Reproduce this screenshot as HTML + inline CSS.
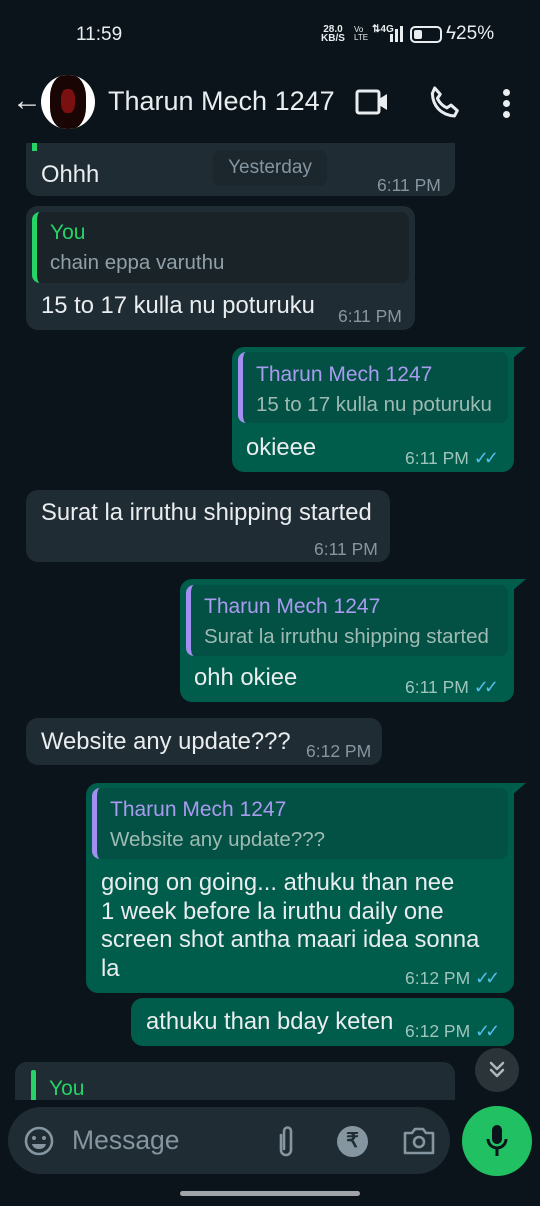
<!DOCTYPE html>
<html><head><meta charset="utf-8"><style>
*{margin:0;padding:0;box-sizing:border-box}
body{width:540px;height:1206px;background:#0b141a;font-family:"Liberation Sans",sans-serif;position:relative;overflow:hidden;color:#e9edef}
.a{position:absolute}
.in{background:#202c33;border-radius:12px}
.out{background:#005c4b;border-radius:12px}
.qi{background:#1a2328;border-radius:8px;border-left:5px solid #25d366}
.qo{background:#025144;border-radius:8px;border-left:5px solid #a38ff0}
.qn{font-size:21px;font-weight:500}
.qt{font-size:20.5px;color:#8fa0a8;white-space:nowrap}
.tx{font-size:23.8px;color:#e9edef;white-space:nowrap}
.tm{font-size:17.5px;color:#8696a0;white-space:nowrap}
.to{color:#9ec5bb}
.ck{color:#53bdeb;font-size:18px;letter-spacing:-5px}
</style></head><body>
<div class="a" style="left:0;top:0;width:540px;height:143px;background:#0b141a;z-index:5">
<div class="a" style="left:76px;top:24px;font-size:19px">11:59</div>
<div class="a" style="left:321px;top:25px;font-size:10px;line-height:9px;font-weight:bold;text-align:center">28.0<br>KB/S</div>
<div class="a" style="left:354px;top:26px;font-size:8px;line-height:8px">Vo<br>LTE</div>
<div class="a" style="left:372px;top:24px;font-size:10px;font-weight:bold">⇅4G</div>
<div class="a" style="left:390px;top:34px;width:3px;height:8px;background:#e9edef"></div>
<div class="a" style="left:395px;top:29px;width:3px;height:13px;background:#e9edef"></div>
<div class="a" style="left:400px;top:26px;width:3px;height:16px;background:#e9edef"></div>
<div class="a" style="left:410px;top:26px;width:32px;height:17px;border:2px solid #e9edef;border-radius:5px;padding:2px"><div style="width:8px;height:100%;background:#e9edef;border-radius:2px"></div></div>
<div class="a" style="left:446px;top:23px;font-size:19px">ϟ25%</div>
<div class="a" style="left:12px;top:86px;font-size:30px;line-height:30px">←</div>
<div class="a" style="left:41px;top:75px;width:54px;height:54px;border-radius:50%;background:#fff;overflow:hidden"><div style="position:absolute;left:9px;top:0;width:36px;height:54px;background:#1a0505;border-radius:40%"><div style="position:absolute;left:11px;top:14px;width:14px;height:24px;background:#7a1010;border-radius:40%"></div></div></div>
<div class="a" style="left:108px;top:86px;font-size:27px">Tharun Mech 1247</div>
<svg class="a" style="left:354px;top:88px" width="36" height="28"><rect x="3" y="3" width="22" height="22" rx="2" fill="none" stroke="#e9edef" stroke-width="3"/><path d="M25 11l8-5v16l-8-5z" fill="#e9edef"/></svg>
<svg class="a" style="left:426px;top:84px" width="38" height="38" viewBox="0 0 24 24"><path d="M5.5 2.5l3.5 4-1.8 2.6c1.2 2.6 3.4 4.8 6 6l2.6-1.8 4 3.5-1.8 3.4C9.7 19.6 4.4 14.3 4 6z" fill="none" stroke="#e9edef" stroke-width="1.9" stroke-linejoin="round"/></svg>
<div class="a" style="left:503px;top:89px;width:7px;height:7px;border-radius:50%;background:#e9edef;box-shadow:0 11px 0 #e9edef,0 22px 0 #e9edef"></div>
</div>

<div class="a in" style="left:26px;top:130px;width:429px;height:66px"></div>
<div class="a" style="left:32px;top:143px;width:5px;height:8px;background:#25d366"></div>
<div class="a tx" style="left:41px;top:161px">Ohhh</div>
<div class="a tm" style="left:377px;top:175px">6:11 PM</div>
<div class="a" style="left:213px;top:150px;width:114px;height:36px;background:#1b262d;border-radius:8px;color:#8696a0;font-size:19px;text-align:center;line-height:36px">Yesterday</div>

<div class="a in" style="left:26px;top:206px;width:389px;height:124px"></div>
<div class="a qi" style="left:32px;top:212px;width:377px;height:71px"></div>
<div class="a qn" style="left:50px;top:221px;color:#25d366">You</div>
<div class="a qt" style="left:50px;top:251px">chain eppa varuthu</div>
<div class="a tx" style="left:41px;top:292px">15 to 17 kulla nu poturuku</div>
<div class="a tm" style="left:338px;top:306px">6:11 PM</div>

<div class="a out" style="left:232px;top:347px;width:282px;height:125px;border-top-right-radius:0"></div>
<svg class="a" style="left:512px;top:347px" width="14" height="12"><path d="M0 0h14L0 12z" fill="#005c4b"/></svg>
<div class="a qo" style="left:238px;top:352px;width:270px;height:71px"></div>
<div class="a qn" style="left:256px;top:363px;color:#a99bf0">Tharun Mech 1247</div>
<div class="a qt" style="left:256px;top:393px;color:#9fbab3">15 to 17 kulla nu poturuku</div>
<div class="a tx" style="left:246px;top:434px">okieee</div>
<div class="a tm to" style="left:405px;top:448px">6:11 PM <span class="ck">✓✓</span></div>

<div class="a in" style="left:26px;top:490px;width:364px;height:72px"></div>
<div class="a tx" style="left:41px;top:499px">Surat la irruthu shipping started</div>
<div class="a tm" style="left:314px;top:539px">6:11 PM</div>

<div class="a out" style="left:180px;top:579px;width:334px;height:123px;border-top-right-radius:0"></div>
<svg class="a" style="left:512px;top:579px" width="14" height="12"><path d="M0 0h14L0 12z" fill="#005c4b"/></svg>
<div class="a qo" style="left:186px;top:585px;width:322px;height:71px"></div>
<div class="a qn" style="left:204px;top:595px;color:#a99bf0">Tharun Mech 1247</div>
<div class="a qt" style="left:204px;top:625px;color:#9fbab3">Surat la irruthu shipping started</div>
<div class="a tx" style="left:194px;top:664px">ohh okiee</div>
<div class="a tm to" style="left:405px;top:677px">6:11 PM <span class="ck">✓✓</span></div>

<div class="a in" style="left:26px;top:718px;width:356px;height:47px"></div>
<div class="a tx" style="left:41px;top:728px">Website any update???</div>
<div class="a tm" style="left:306px;top:741px">6:12 PM</div>

<div class="a out" style="left:86px;top:783px;width:428px;height:210px;border-top-right-radius:0"></div>
<svg class="a" style="left:512px;top:783px" width="14" height="12"><path d="M0 0h14L0 12z" fill="#005c4b"/></svg>
<div class="a qo" style="left:92px;top:788px;width:416px;height:71px"></div>
<div class="a qn" style="left:110px;top:798px;color:#a99bf0">Tharun Mech 1247</div>
<div class="a qt" style="left:110px;top:828px;color:#9fbab3">Website any update???</div>
<div class="a tx" style="left:101px;top:869px;line-height:28.5px">going on going... athuku than nee<br>1 week before la iruthu daily one<br>screen shot antha maari idea sonna<br>la</div>
<div class="a tm to" style="left:405px;top:968px">6:12 PM <span class="ck">✓✓</span></div>

<div class="a out" style="left:131px;top:998px;width:383px;height:48px"></div>
<div class="a tx" style="left:146px;top:1008px">athuku than bday keten</div>
<div class="a tm to" style="left:405px;top:1021px">6:12 PM <span class="ck">✓✓</span></div>

<div class="a in" style="left:15px;top:1062px;width:440px;height:60px"></div>
<div class="a" style="left:31px;top:1070px;width:5px;height:40px;background:#25d366;border-radius:2px"></div>
<div class="a qn" style="left:49px;top:1077px;color:#25d366">You</div>

<div class="a" style="left:475px;top:1048px;width:44px;height:44px;border-radius:50%;background:#2a3439"></div>
<svg class="a" style="left:487px;top:1060px" width="20" height="20"><path d="M4 3l6 6 6-6M4 10l6 6 6-6" fill="none" stroke="#aeb8bd" stroke-width="2.5" stroke-linecap="round" stroke-linejoin="round"/></svg>

<div class="a" style="left:0;top:1100px;width:540px;height:106px;background:#0b141a"></div>
<div class="a" style="left:8px;top:1107px;width:442px;height:67px;border-radius:34px;background:#1f2c33"></div>
<svg class="a" style="left:23px;top:1125px" width="32" height="32"><circle cx="16" cy="16" r="13" fill="none" stroke="#8696a0" stroke-width="2.6"/><circle cx="11" cy="13" r="2" fill="#8696a0"/><circle cx="21" cy="13" r="2" fill="#8696a0"/><path d="M9 19h14c-1 4-4 5-7 5s-6-1-7-5z" fill="#8696a0"/></svg>
<div class="a" style="left:72px;top:1125px;font-size:26.5px;color:#8696a0">Message</div>
<svg class="a" style="left:274px;top:1123px" width="24" height="36"><path d="M7 12v15a5 5 0 0010 0V8a3.5 3.5 0 00-7 0v18" fill="none" stroke="#8696a0" stroke-width="2.6" stroke-linecap="round"/></svg>
<div class="a" style="left:337px;top:1126px;width:31px;height:31px;border-radius:50%;background:#8696a0;color:#1f2c33;font-size:20px;text-align:center;line-height:31px;font-weight:bold">₹</div>
<svg class="a" style="left:402px;top:1126px" width="34" height="30"><path d="M3 7h7l3-4h8l3 4h7v20H3z" fill="none" stroke="#8696a0" stroke-width="2.6" stroke-linejoin="round"/><circle cx="17" cy="16" r="5" fill="none" stroke="#8696a0" stroke-width="2.6"/></svg>
<div class="a" style="left:462px;top:1106px;width:70px;height:70px;border-radius:50%;background:#21c063"></div>
<svg class="a" style="left:485px;top:1124px" width="24" height="34"><rect x="7" y="1" width="10" height="19" rx="5" fill="#0b141a"/><path d="M3 15a9 9 0 0018 0M12 24v8" fill="none" stroke="#0b141a" stroke-width="3"/></svg>
<div class="a" style="left:180px;top:1191px;width:180px;height:5px;border-radius:3px;background:#a0a4a8"></div>
</body></html>
